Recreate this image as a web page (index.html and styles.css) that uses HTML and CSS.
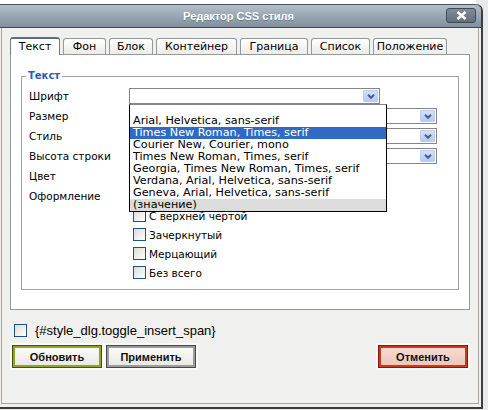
FILE: index.html
```html
<!DOCTYPE html>
<html lang="ru">
  <head>
    <meta charset="UTF-8" />
    <meta content="width=device-width, initial-scale=1.0" name="viewport" />
    <link rel="stylesheet" href="styles.css">
  </head>
  <body>
    <div class="backdrop"></div>

    <div class="dialog">
      <div class="titlebar">
        <span class="title">Редактор CSS стиля</span>
        <span class="close">
          <svg width="11" height="9" viewBox="0 0 11 9">
            <path d="M1.5 1 L9.5 8 M9.5 1 L1.5 8" stroke="#fff" stroke-width="2.4" />
          </svg>
        </span>
      </div>

      <div class="content">
        <div class="tabs">
          <span class="tab active">Текст</span>
          <span class="tab">Фон</span>
          <span class="tab">Блок</span>
          <span class="tab">Контейнер</span>
          <span class="tab">Граница</span>
          <span class="tab">Список</span>
          <span class="tab">Положение</span>
        </div>

        <div class="panel">
          <fieldset>
            <legend>Текст</legend>

            <div class="row">
              <label>Шрифт</label>
              <div class="select narrow">
                <span class="arrow">
                  <svg width="8" height="5" viewBox="0 0 8 5">
                    <polyline points="1,0.8 4,3.8 7,0.8" fill="none" stroke="#4a5d84" stroke-width="2" />
                  </svg>
                </span>
                <!-- открытый список шрифтов -->
                <ul class="list">
                  <li></li>
                  <li>Arial, Helvetica, sans-serif</li>
                  <li class="selected">Times New Roman, Times, serif</li>
                  <li>Courier New, Courier, mono</li>
                  <li>Times New Roman, Times, serif</li>
                  <li>Georgia, Times New Roman, Times, serif</li>
                  <li>Verdana, Arial, Helvetica, sans-serif</li>
                  <li>Geneva, Arial, Helvetica, sans-serif</li>
                  <li class="custom">(значение)</li>
                </ul>
              </div>
            </div>
            <div class="row">
              <label>Размер</label>
              <div class="select wide">
                <span class="arrow">
                  <svg width="8" height="5" viewBox="0 0 8 5">
                    <polyline points="1,0.8 4,3.8 7,0.8" fill="none" stroke="#4a5d84" stroke-width="2" />
                  </svg>
                </span>
              </div>
            </div>
            <div class="row">
              <label>Стиль</label>
              <div class="select wide">
                <span class="arrow">
                  <svg width="8" height="5" viewBox="0 0 8 5">
                    <polyline points="1,0.8 4,3.8 7,0.8" fill="none" stroke="#4a5d84" stroke-width="2" />
                  </svg>
                </span>
              </div>
            </div>
            <div class="row">
              <label>Высота строки</label>
              <div class="select wide">
                <span class="arrow">
                  <svg width="8" height="5" viewBox="0 0 8 5">
                    <polyline points="1,0.8 4,3.8 7,0.8" fill="none" stroke="#4a5d84" stroke-width="2" />
                  </svg>
                </span>
              </div>
            </div>
            <div class="row">
              <label>Цвет</label>
              <div class="color-input"></div>
            </div>
            <div class="row deco">
              <label>Оформление</label>
              <div class="checks">
                <!-- первый пункт закрыт списком -->
                <div class="check"><span class="box"></span></div>
                <div class="check"><span class="box"></span>С верхней чертой</div>
                <div class="check"><span class="box"></span>Зачеркнутый</div>
                <div class="check"><span class="box"></span>Мерцающий</div>
                <div class="check"><span class="box"></span>Без всего</div>
              </div>
            </div>
          </fieldset>
        </div>

        <div class="insert-row">
          <span class="box"></span>
          <span class="insert-text">{#style_dlg.toggle_insert_span}</span>
        </div>

        <div class="buttons">
          <span class="btn update">Обновить</span>
          <span class="btn apply">Применить</span>
          <span class="btn cancel">Отменить</span>
        </div>
      </div>
    </div>
  </body>
</html>
```

FILE: styles.css
```css
body {
  margin: 0;
  background: #e9e9e9;
  font-family: "DejaVu Sans", Verdana, sans-serif;
  color: #000;
}
.backdrop {
  width: 476px;
  height: 4px;
  background: #fff;
}
.dialog {
  width: 481px;
  background: #f0f0ee;
  border-right: 2px solid #3c3f42;
  border-bottom: 2px solid #3a3a3a;
  border-top-right-radius: 7px;
}
.titlebar {
  height: 22px;
  display: flex;
  align-items: center;
  justify-content: center;
  position: relative;
  border-top: 1px solid #4a545e;
  border-bottom: 1px solid #3d464f;
  border-top-right-radius: 6px;
  background: linear-gradient(#b5c0ca, #9aa9b6 45%, #80909e);
}
.title {
  font-family: "Liberation Sans", Arial, sans-serif;
  font-weight: bold;
  font-size: 11px;
  color: #fff;
  text-shadow: 0 1px 0 #6c7a86;
  margin-left: -4px;
}
.close {
  position: absolute;
  right: 5px;
  top: 3px;
  width: 28px;
  height: 13px;
  border: 1px solid #3f4a54;
  border-radius: 3px;
  background: linear-gradient(#808e9b, #63707b);
  display: flex;
  align-items: center;
  justify-content: center;
}
.content {
  margin: 0 2px 3px 1px;
  height: 376px;
  box-sizing: border-box;
  padding: 9px 8px 0 8px;
  border-left: 1px solid #aaa59b;
  border-right: 1px solid #aaa59b;
  border-bottom: 1px solid #aaa59b;
}
.tabs {
  display: flex;
  align-items: flex-end;
  gap: 3px;
  height: 17px;
}
.tab {
  box-sizing: border-box;
  height: 16px;
  border: 1px solid #919b9c;
  border-bottom: none;
  border-radius: 3px 3px 0 0;
  background: linear-gradient(#ffffff, #ecebe6);
  font-size: 11px;
  line-height: 15px;
  text-align: center;
}
.tab.active {
  height: 18px;
  margin-bottom: -1px;
  background: #fff;
  border-color: #6e7e8e;
  border-top: 2px solid #5d6d7e;
  line-height: 15px;
  position: relative;
  z-index: 1;
}
.tab:nth-child(1) { width: 50px; }
.tab:nth-child(2) { width: 43px; }
.tab:nth-child(3) { width: 44px; }
.tab:nth-child(4) { width: 81px; }
.tab:nth-child(5) { width: 68px; }
.tab:nth-child(6) { width: 59px; }
.tab:nth-child(7) { width: 74px; }

.panel {
  box-sizing: border-box;
  height: 256px;
  background: #fff;
  border: 1px solid #919b9c;
  padding: 15px 10px 0 10px;
}
fieldset {
  margin: 0;
  padding: 4px 10px 7px 7px;
  border: 1px solid #a0a4a6;
  font-size: 10.5px;
}
legend {
  font-size: 10px;
  line-height: 12px;
  font-weight: bold;
  color: #2a5db0;
  padding: 0 2px;
  margin-left: -3px;
}
.row {
  display: flex;
  align-items: center;
  height: 20px;
}
.row label {
  width: 100px;
  flex-shrink: 0;
}
.select {
  box-sizing: border-box;
  height: 16px;
  border: 1px solid #858585;
  background: #fff;
  display: flex;
  justify-content: flex-end;
  align-items: center;
  padding-right: 1px;
  position: relative;
}
.select.narrow {
  width: 251px;
}
.select.wide {
  width: 308px;
}
.arrow {
  box-sizing: border-box;
  width: 15px;
  height: 12px;
  border: 1px solid #bccdf3;
  background: linear-gradient(#d3e0fc, #b5c8f5);
  border-radius: 1px;
  display: flex;
  align-items: center;
  justify-content: center;
}
.list {
  position: absolute;
  left: -1px;
  top: 15px;
  width: 256px;
  margin: 0;
  padding: 0;
  list-style: none;
  background: #fff;
  border: 1px solid #000;
  border-top: 1px solid #858585;
  z-index: 5;
  font-size: 11.2px;
}
.list li {
  height: 12px;
  line-height: 12px;
  padding-left: 3px;
  white-space: nowrap;
}
.list li:first-child {
  height: 10px;
}
.list .selected {
  background: #316ac5;
  color: #fff;
}
.list .custom {
  background: #dcdcdc;
}
.color-input {
  width: 60px;
  height: 14px;
  border: 1px solid #858585;
}
.row.deco {
  align-items: flex-start;
  height: auto;
}
.row.deco label {
  line-height: 20px;
}
.checks {
  padding-top: 1px;
  margin-left: 4px;
}
.check {
  height: 19px;
  display: flex;
  align-items: center;
  gap: 3px;
}
.box {
  box-sizing: border-box;
  width: 13px;
  height: 13px;
  border: 1px solid #1c5180;
  background: linear-gradient(135deg, #dcdcd6, #ffffff);
  flex-shrink: 0;
}
.insert-row {
  display: flex;
  align-items: center;
  height: 13px;
  margin-top: 14px;
  padding-left: 4px;
}
.insert-text {
  font-family: "Liberation Sans", Arial, sans-serif;
  font-size: 13px;
  margin-left: 8px;
}
.buttons {
  display: flex;
  gap: 4px;
  margin-top: 8px;
  padding: 0 2px;
}
.btn {
  box-sizing: border-box;
  width: 90px;
  height: 23px;
  display: flex;
  align-items: center;
  justify-content: center;
  font-family: "Liberation Sans", Arial, sans-serif;
  font-weight: bold;
  font-size: 11px;
  color: #111;
  background: linear-gradient(#fdfdfb, #e8e7e2);
}
.btn.update {
  border: 1px solid #485013;
  box-shadow: inset 0 0 0 2px #8ea22c, 0 0 0 2px #fafaf8;
}
.btn.apply {
  border: 1px solid #484848;
  box-shadow: inset 0 0 0 2px #9c9c9c, 0 0 0 2px #fafaf8;
}
.btn.cancel {
  margin-left: auto;
  border: 1px solid #7e1d0c;
  box-shadow: inset 0 0 0 2px #c9391b, 0 0 0 2px #fafaf8;
  background: linear-gradient(#f7ddd6, #eec3b8);
}
```
